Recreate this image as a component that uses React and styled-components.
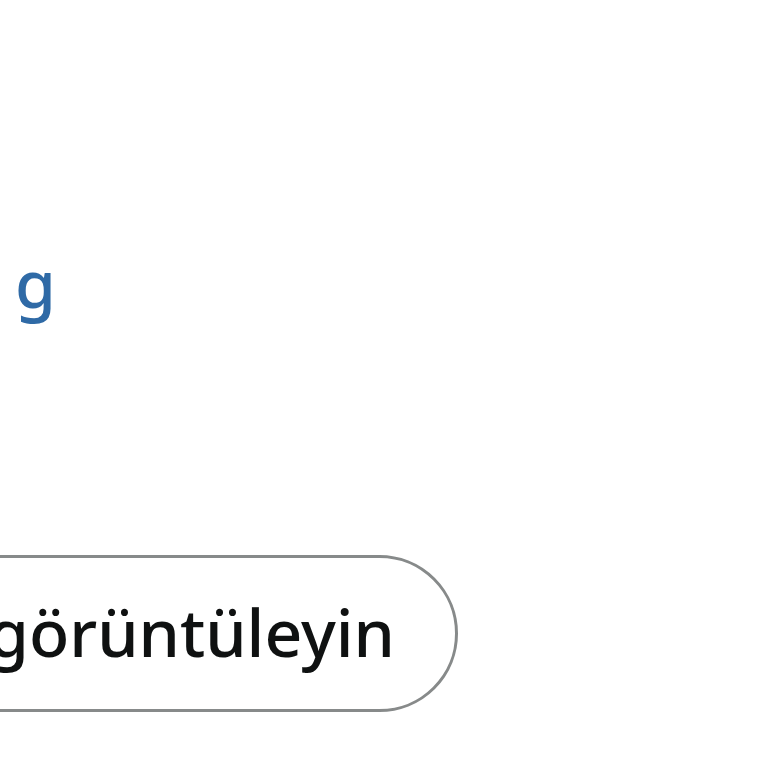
import React from "react";
import styled, { createGlobalStyle } from "styled-components";

const Global = createGlobalStyle`
  html, body {
    margin: 0;
    padding: 0;
    background: #ffffff;
    overflow: hidden;
  }
  body {
    font-family: "Noto Sans", "DejaVu Sans", Arial, sans-serif;
    color: #0f1111;
  }
`;

const Page = styled.div`
  width: 768px;
  height: 768px;
  display: flex;
  flex-direction: column;
  padding-top: 232px;
  box-sizing: border-box;
`;

/* Row whose content is right-aligned and spills off the left edge */
const EdgeRow = styled.div`
  width: ${(p) => p.$width}px;
  display: flex;
  justify-content: flex-end;
  white-space: nowrap;
`;

const Link = styled.a`
  font-size: 66px;
  font-weight: 500;
  line-height: 100px;
  color: #2f6aa6;
  text-decoration: none;
`;

const Spacer = styled.div`
  height: ${(p) => p.$h}px;
  flex-shrink: 0;
`;

const PillButton = styled.button`
  flex-shrink: 0;
  height: 157px;
  box-sizing: border-box;
  display: inline-flex;
  align-items: center;
  padding: 0 60px 6px 60px;
  border: 3px solid #878a8a;
  border-radius: 80px;
  background: #ffffff;
  font-family: "Noto Sans", "DejaVu Sans", Arial, sans-serif;
  font-size: 66px;
  font-weight: 500;
  color: #0f1111;
  cursor: pointer;
`;

export default function App() {
  return (
    <>
      <Global />
      <Page>
        <EdgeRow $width={56}>
          <Link href="#">Ağırlık: 250 g</Link>
        </EdgeRow>
        <Spacer $h={223} />
        <EdgeRow $width={458}>
          <PillButton>Tüm yorumları görüntüleyin</PillButton>
        </EdgeRow>
      </Page>
    </>
  );
}
